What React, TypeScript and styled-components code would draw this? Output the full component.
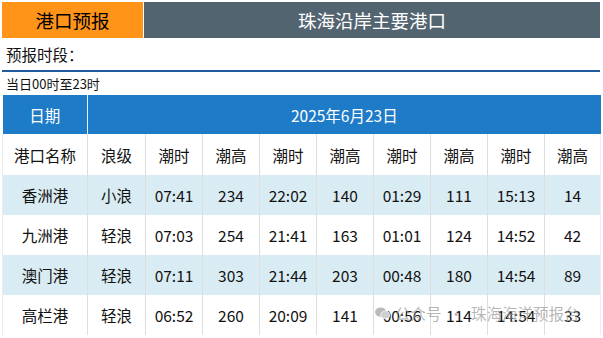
import styled, { createGlobalStyle } from 'styled-components';

const GlobalStyle = createGlobalStyle`
    html, body {
        margin: 0;
        padding: 0;
        background: #ffffff;
    }
    body {
        font-family: "Noto Sans CJK SC", "Noto Sans", sans-serif;
        color: #111;
    }
`

const columns = [85, 58, 57, 57, 57, 57, 57, 57, 57, 56]
const heads = ['港口名称', '浪级', '潮时', '潮高', '潮时', '潮高', '潮时', '潮高', '潮时', '潮高']

const rows = [
    ['香洲港', '小浪', '07:41', '234', '22:02', '140', '01:29', '111', '15:13', '14'],
    ['九洲港', '轻浪', '07:03', '254', '21:41', '163', '01:01', '124', '14:52', '42'],
    ['澳门港', '轻浪', '07:11', '303', '21:44', '203', '00:48', '180', '14:54', '89'],
    ['高栏港', '轻浪', '06:52', '260', '20:09', '141', '00:56', '114', '14:54', '33'],
]

export default function App() {
    return (
        <>
            <GlobalStyle />
            <Page>
                <TitleBar>
                    <TitleLeft>港口预报</TitleLeft>
                    <TitleRight>珠海沿岸主要港口</TitleRight>
                </TitleBar>
                <Period>预报时段：</Period>
                <Rule />
                <Range>当日00时至23时</Range>
                <Table>
                    <colgroup>
                        {columns.map((w, i) => <col key={i} style={{ width: w }} />)}
                    </colgroup>
                    <thead>
                        <tr>
                            <DateCell>日期</DateCell>
                            <DateCell colSpan={9}>2025年6月23日</DateCell>
                        </tr>
                    </thead>
                    <tbody>
                        <Row $shade={false} $tall>
                            {heads.map((h, i) => <Cell key={i}>{h}</Cell>)}
                        </Row>
                        {rows.map((r, i) => (
                            <Row key={i} $shade={i % 2 === 0}>
                                {r.map((v, j) => <Cell key={j}>{v}</Cell>)}
                            </Row>
                        ))}
                    </tbody>
                </Table>
                <Watermark>
                    <svg width="15" height="13" viewBox="0 0 16 14">
                        <ellipse cx="6" cy="5.5" rx="6" ry="5" fill="#b9b9b9" />
                        <ellipse cx="11" cy="8.5" rx="5" ry="4.2" fill="#cfcfcf" stroke="#fff" strokeWidth="0.8" />
                    </svg>
                    <span>公众号</span>
                    <Dot>·</Dot>
                    <span>珠海海洋预报台</span>
                </Watermark>
            </Page>
        </>
    )
}

const Page = styled.div`
    position: relative;
    width: 598px;
    padding: 2px;
`

const TitleBar = styled.div`
    display: flex;
    height: 36px;
    gap: 1px;
`

const TitleLeft = styled.div`
    width: 141px;
    background: #ff9419;
    display: flex;
    align-items: center;
    justify-content: center;
    font-size: 18.5px;
    font-weight: 400;
    color: #000;
`

const TitleRight = styled.div`
    flex: 1;
    background: #536471;
    display: flex;
    align-items: center;
    justify-content: center;
    font-size: 18.5px;
    font-weight: 400;
    color: #fff;
`

const Period = styled.div`
    height: 32px;
    display: flex;
    align-items: center;
    padding-left: 4px;
    font-size: 15.5px;
`

const Rule = styled.div`
    height: 2px;
    background: #1f5c9f;
`

const Range = styled.div`
    height: 23px;
    display: flex;
    align-items: center;
    padding-left: 4px;
    font-size: 13px;
`

const Table = styled.table`
    width: 598px;
    border-collapse: collapse;
    table-layout: fixed;
`

const DateCell = styled.th`
    height: 39px;
    padding: 0;
    background: #1e7bc7;
    color: #fff;
    font-size: 15.5px;
    font-weight: 400;
    text-align: center;
    border-left: 1px solid #e8f1f8;
    &:first-child {
        border-left: none;
    }
`

const Row = styled.tr<{ $shade: boolean; $tall?: boolean }>`
    height: ${p => (p.$tall ? 41 : 40)}px;
    background: ${p => (p.$shade ? '#daecf3' : '#ffffff')};
`

const Cell = styled.td`
    padding: 0;
    text-align: center;
    font-size: 15.5px;
    color: #111;
    border-left: 1px solid #dedede;
    &:first-child {
        border-left: 1px solid #ececec;
    }
    &:last-child {
        border-right: 1px solid #ececec;
    }
`

const Watermark = styled.div`
    position: absolute;
    left: 375px;
    top: 302px;
    display: flex;
    align-items: center;
    gap: 5px;
    font-size: 15.5px;
    color: rgba(150, 150, 150, 0.7);
    pointer-events: none;
`

const Dot = styled.span`
    margin: 0 2px;
`
